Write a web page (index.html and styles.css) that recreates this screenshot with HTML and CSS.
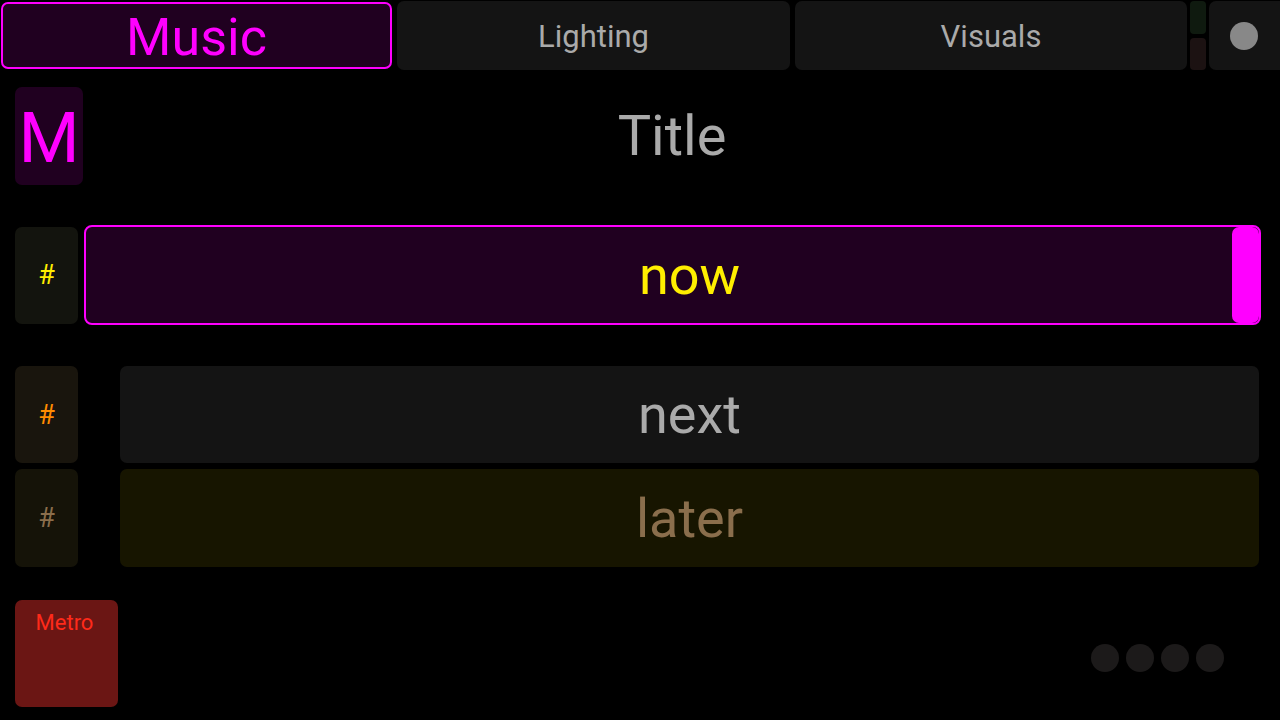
FILE: index.html
```html
<!DOCTYPE html>
<html>
<head>
<meta charset="utf-8">
<link rel="stylesheet" href="styles.css">
</head>
<body>
<div class="app">
  <div class="tabs">
    <div class="tab tab-active">Music</div>
    <div class="tab tab-lighting">Lighting</div>
    <div class="tab tab-visuals">Visuals</div>
    <div class="mini-col">
      <div class="mini mini-top"></div>
      <div class="mini mini-bottom"></div>
    </div>
    <div class="rec-btn"><span class="rec-dot"></span></div>
  </div>

  <div class="header">
    <div class="mode-box">M</div>
    <div class="title">Title</div>
  </div>

  <div class="row row-now">
    <div class="hash hash-now">#</div>
    <div class="bar bar-now">
      <span class="bar-text">now</span>
      <span class="slider"></span>
    </div>
  </div>

  <div class="row row-next">
    <div class="hash hash-next">#</div>
    <div class="bar bar-next"><span class="bar-text">next</span></div>
  </div>

  <div class="row row-later">
    <div class="hash hash-later">#</div>
    <div class="bar bar-later"><span class="bar-text">later</span></div>
  </div>

  <div class="bottom">
    <div class="metro">Metro</div>
    <div class="dots">
      <span class="dot"></span>
      <span class="dot"></span>
      <span class="dot"></span>
      <span class="dot"></span>
    </div>
  </div>
</div>
</body>
</html>
```

FILE: styles.css
```css
html, body {
  margin: 0;
  padding: 0;
  background: #000;
}
body {
  width: 1280px;
  height: 720px;
  overflow: hidden;
  font-family: Roboto, "Noto Sans", sans-serif;
}
.app {
  display: flex;
  flex-direction: column;
}

/* Tabs */
.tabs {
  display: flex;
  padding: 1px 0 0 1px;
  height: 69px;
}
.tab {
  display: flex;
  align-items: center;
  justify-content: center;
  background: #141414;
  border-radius: 7px;
  color: #aaaaaa;
  font-size: 31px;
  box-sizing: border-box;
  padding-top: 2px;
}
.tab-active {
  width: 391px;
  margin: 1px 0;
  background: #200020;
  border: 2px solid #ff00ff;
  color: #ff00ff;
  font-size: 52px;
  padding-top: 3px;
}
.tab-lighting {
  width: 393px;
  margin-left: 5px;
}
.tab-visuals {
  width: 392px;
  margin-left: 5px;
}
.mini-col {
  display: flex;
  flex-direction: column;
  gap: 4px;
  width: 16px;
  margin-left: 3px;
}
.mini {
  flex: 1;
  border-radius: 4px;
}
.mini-top { background: #0f1a0f; }
.mini-bottom { background: #1c1212; }
.rec-btn {
  width: 71px;
  margin-left: 3px;
  background: #141414;
  border-radius: 7px 0 0 7px;
  display: flex;
  align-items: center;
  justify-content: center;
}
.rec-dot {
  width: 28px;
  height: 28px;
  border-radius: 50%;
  background: #888888;
  margin-right: 1px;
}

/* Header */
.header {
  display: flex;
  align-items: center;
  margin-top: 17px;
  padding-left: 15px;
  padding-right: 19px;
}
.mode-box {
  width: 68px;
  height: 98px;
  background: #200020;
  border-radius: 7px;
  color: #ff00ff;
  font-size: 70px;
  display: flex;
  align-items: center;
  justify-content: center;
  padding-top: 4px;
  box-sizing: border-box;
}
.title {
  flex: 1;
  text-align: center;
  color: #aaaaaa;
  font-size: 56px;
}

/* Rows */
.row {
  display: flex;
  align-items: center;
  padding-left: 15px;
}
.row-now {
  margin-top: 40px;
  height: 100px;
  padding-right: 19px;
}
.row-next {
  margin-top: 41px;
  height: 97px;
  padding-right: 21px;
}
.row-later {
  margin-top: 6px;
  height: 98px;
  padding-right: 21px;
}
.hash {
  width: 63px;
  height: 97px;
  border-radius: 7px;
  display: flex;
  align-items: center;
  justify-content: center;
  font-size: 27px;
  flex: none;
}
.row-later .hash { height: 98px; }
.hash-now { background: #13140e; color: #ffee00; }
.hash-next { background: #19150d; color: #ff8c00; }
.hash-later { background: #151308; color: #8a6e4c; }

.bar {
  flex: 1;
  height: 100%;
  border-radius: 7px;
  display: flex;
  align-items: center;
  box-sizing: border-box;
  font-size: 54px;
}
.bar-text {
  flex: 1;
  text-align: center;
}
.bar-now {
  margin-left: 6px;
  background: #200020;
  border: 2px solid #ff00ff;
  border-radius: 8px;
  color: #ffee00;
  padding-left: 61px;
  align-items: stretch;
}
.bar-now .bar-text {
  display: flex;
  align-items: center;
  justify-content: center;
}
.slider {
  width: 27px;
  background: #ff00ff;
  border-radius: 7px;
  flex: none;
}
.bar-next {
  margin-left: 42px;
  background: #141414;
  color: #aaaaaa;
}
.bar-later {
  margin-left: 42px;
  background: #171500;
  color: #8a6e4c;
}

/* Bottom */
.bottom {
  display: flex;
  align-items: center;
  justify-content: space-between;
  margin-top: 33px;
  padding-left: 15px;
  padding-right: 56px;
}
.metro {
  width: 103px;
  height: 107px;
  box-sizing: border-box;
  background: #6b1614;
  border-radius: 7px;
  color: #ff2a1a;
  font-size: 22px;
  text-align: center;
  padding-top: 10px;
  padding-right: 4px;
}
.dots {
  display: flex;
  gap: 7px;
  margin-top: 9px;
}
.dot {
  width: 28px;
  height: 28px;
  border-radius: 50%;
  background: #1c1a1a;
}
```
